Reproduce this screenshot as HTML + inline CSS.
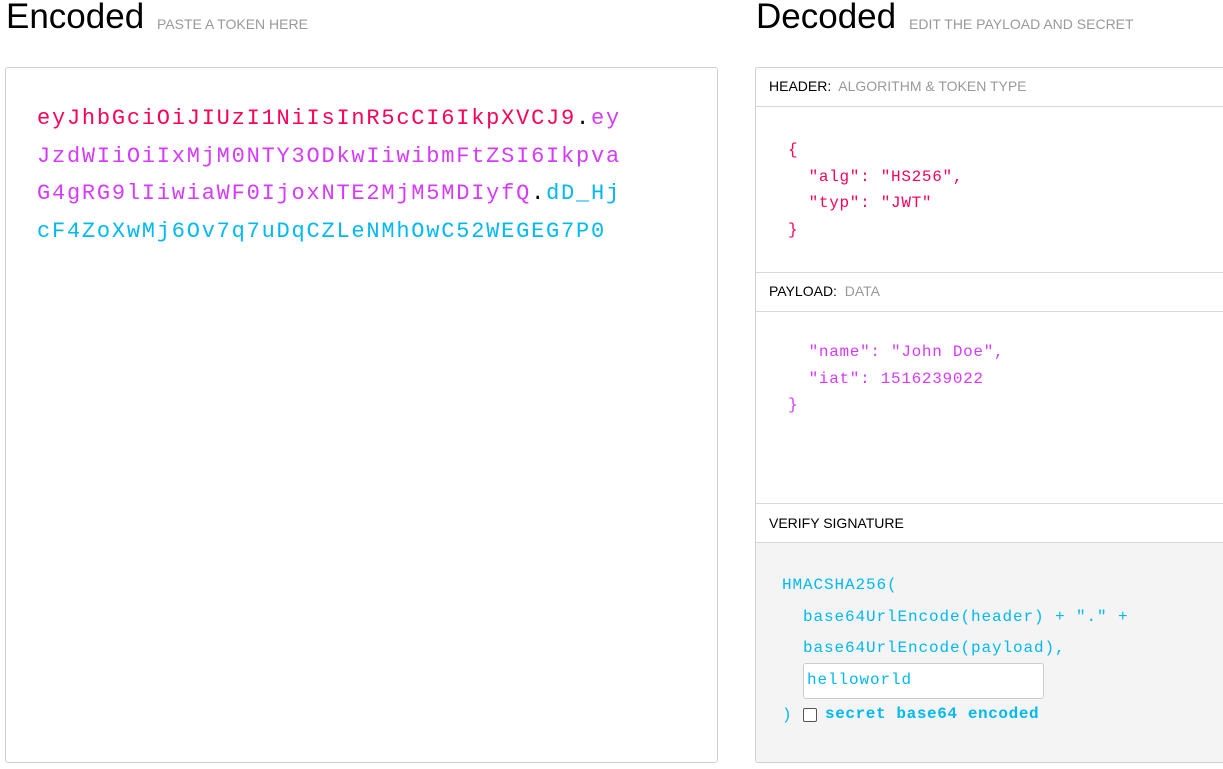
<!DOCTYPE html>
<html><head><style>
*{margin:0;padding:0;box-sizing:border-box}
body{width:1223px;height:769px;background:#fff;position:relative;overflow:hidden;font-family:"Liberation Sans",sans-serif}
.abs{position:absolute;white-space:pre}
.h1{font-size:35px;color:#000;top:-3px}
.sub{font-size:14px;color:#999;top:16px}
.mono{font-family:"Liberation Mono",monospace}
.enc{font-size:22px;letter-spacing:1.77px;line-height:37.5px;left:37px;top:100px}
.r{color:#fb015b}.p{color:#d63aff}.c{color:#00b9f1}
.box{position:absolute;border:1px solid #d0d0d0;border-radius:3px}
.line{position:absolute;left:756px;width:467px;height:1px;background:#d7d7d7}
.lbl{font-size:14px;color:#000}
.lbl span{color:#999}
.code{font-size:16px;letter-spacing:0.7px}
.sig{font-size:16px;letter-spacing:0.9px;color:#00b9f1}
</style></head><body>
<div class="abs h1" style="left:6px">Encoded</div>
<div class="abs sub" style="left:157px">PASTE A TOKEN HERE</div>
<div class="abs h1" style="left:756px">Decoded</div>
<div class="abs sub" style="left:909px">EDIT THE PAYLOAD AND SECRET</div>

<div class="box" style="left:5px;top:67px;width:713px;height:696px"></div>
<div class="abs mono enc"><span class="r">eyJhbGciOiJIUzI1NiIsInR5cCI6IkpXVCJ9</span>.<span class="p">ey</span>
<span class="p">JzdWIiOiIxMjM0NTY3ODkwIiwibmFtZSI6Ikpva</span>
<span class="p">G4gRG9lIiwiaWF0IjoxNTE2MjM5MDIyfQ</span>.<span class="c">dD_Hj</span>
<span class="c">cF4ZoXwMj6Ov7q7uDqCZLeNMhOwC52WEGEG7P0</span></div>

<div class="box" style="left:755px;top:67px;width:480px;height:696px;border-right:none"></div>
<div style="position:absolute;left:756px;top:543px;width:467px;height:219px;background:#f4f4f4"></div>
<div class="line" style="top:106px"></div>
<div class="line" style="top:272px"></div>
<div class="line" style="top:311px"></div>
<div class="line" style="top:503px"></div>
<div class="line" style="top:542px"></div>
<div class="abs lbl" style="left:769px;top:78px">HEADER:  <span>ALGORITHM &amp; TOKEN TYPE</span></div>
<div class="abs lbl" style="left:769px;top:283px">PAYLOAD:  <span>DATA</span></div>
<div class="abs lbl" style="left:769px;top:515px">VERIFY SIGNATURE</div>

<div class="abs mono code r" style="left:788px;top:137px;line-height:26.5px">{
  "alg": "HS256",
  "typ": "JWT"
}</div>
<div class="abs mono code p" style="left:788px;top:339px;line-height:26.5px">  "name": "John Doe",
  "iat": 1516239022
}</div>

<div class="abs mono sig" style="left:782px;top:570px;line-height:31.5px">HMACSHA256(
  base64UrlEncode(header) + "." +
  base64UrlEncode(payload),</div>
<div style="position:absolute;left:803px;top:663px;width:241px;height:36px;background:#fff;border:1px solid #ccc;border-radius:3px"></div>
<div class="abs mono sig" style="left:807px;top:671px">helloworld</div>
<div class="abs mono sig" style="left:782px;top:706px">)</div>
<div style="position:absolute;left:803px;top:708px;width:14px;height:14px;border:1px solid #555;border-radius:2px;background:#fff"></div>
<div class="abs mono sig" style="left:825px;top:705px;font-weight:bold;letter-spacing:0.6px">secret base64 encoded</div>
</body></html>
